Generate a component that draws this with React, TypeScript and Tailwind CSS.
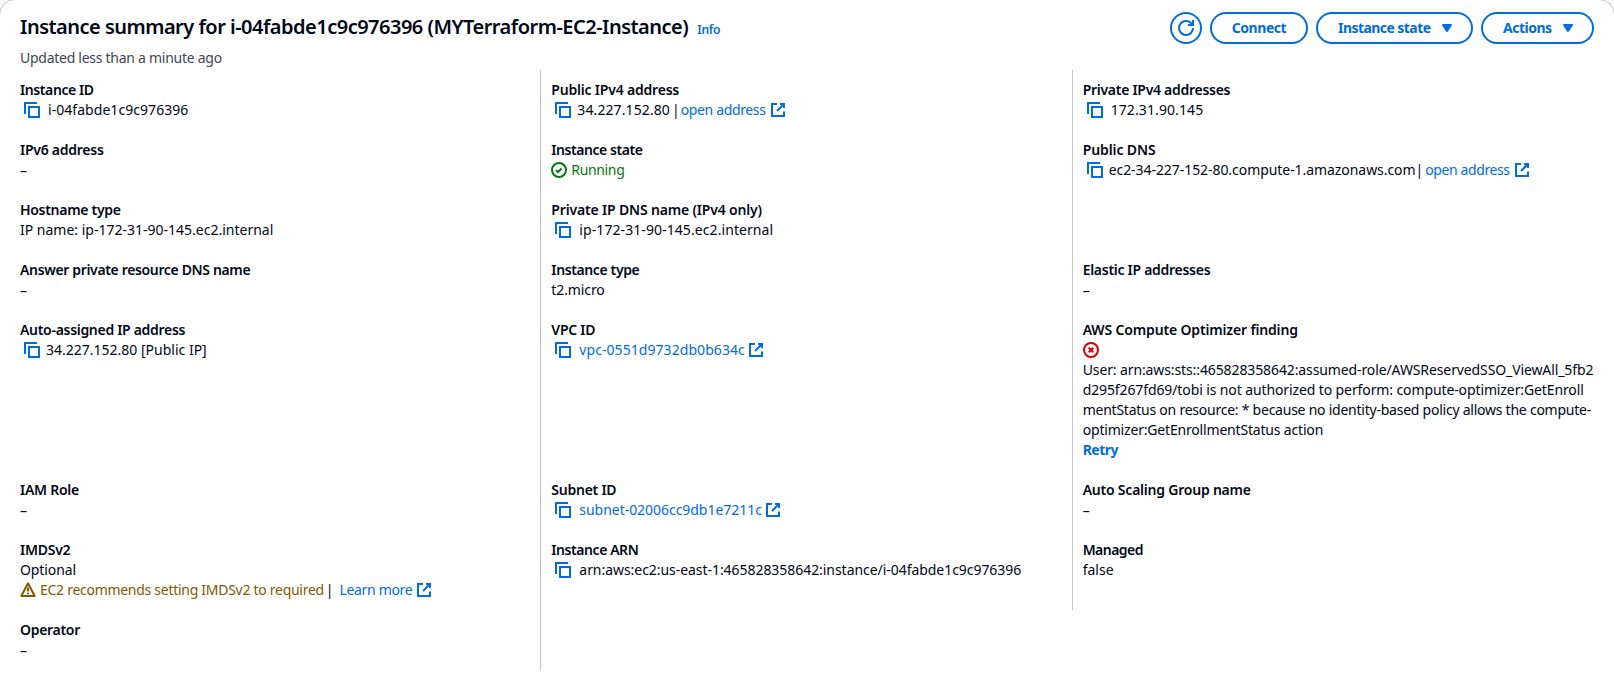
import React from "react";

function Icon({ className = "", children }: { className?: string; children: React.ReactNode }) {
  return (
    <svg viewBox="0 0 16 16" className={"h-4 w-4 shrink-0 " + className} fill="none" stroke="currentColor" strokeWidth="2">
      {children}
    </svg>
  );
}

const Copy = () => (
  <Icon className="text-[#006ce0]">
    <path d="M1 12V1h12" />
    <path d="M5 5h10v10H5z" />
  </Icon>
);

const External = () => (
  <Icon className="text-[#006ce0]">
    <path d="M10 2h4v4" />
    <path d="m7 9 7-7" />
    <path d="M14 9.5V14H2V2h5" />
  </Icon>
);

const Refresh = () => (
  <Icon>
    <path d="M10 5h5V0" />
    <path d="M15 8a6.957 6.957 0 0 1-7 7 6.957 6.957 0 0 1-7-7 6.957 6.957 0 0 1 7-7 6.87 6.87 0 0 1 6.3 4" />
  </Icon>
);

const Success = () => (
  <Icon>
    <circle cx="8" cy="8" r="7" />
    <path d="m5 8 2 2 3.521-3.521" />
  </Icon>
);

const Failure = () => (
  <Icon className="text-[#db0000]">
    <circle cx="8" cy="8" r="7" />
    <path d="m10.3 5.7-4.6 4.6M10.3 10.3 5.7 5.7" />
  </Icon>
);

const Warning = () => (
  <Icon>
    <path d="m8 1.3 6.7 12.7H1.3L8 1.3z" strokeLinejoin="round" />
    <path d="M8 5.5v4M8 10.7v1.6" />
  </Icon>
);

const Caret = () => (
  <Icon className="ml-2">
    <path d="M4 5h8l-4 6-4-6z" fill="currentColor" strokeLinejoin="round" />
  </Icon>
);

type CellProps = { label: string; track: string; border?: boolean; children?: React.ReactNode };

function Cell({ label, track, border = true, children }: CellProps) {
  return (
    <div className={"min-w-0 border-r p-[10px] " + (border ? "border-[#c6c6cd]" : "border-transparent")}>
      <div className="flex">
        <span className={"whitespace-nowrap font-semibold " + track}>{label}</span>
      </div>
      {children}
    </div>
  );
}

function Row({ className = "", children }: { className?: string; children: React.ReactNode }) {
  return <div className={"flex h-5 items-center whitespace-nowrap " + className}>{children}</div>;
}

const Empty = () => <Row className="pt-0.5">–</Row>;

const BUTTON = "flex h-8 items-center rounded-full border-2 border-[#006ce0] font-bold text-[#006ce0]";
const LINK = "text-[#006ce0]";

export default function App() {
  return (
    <div className="h-[680px] w-[1614px] overflow-hidden bg-[#f9f9fa] font-['Noto_Sans',sans-serif] text-[14px] leading-5 text-[#000716]">
      <div className="-mx-px -mt-px h-[700px] rounded-t-[16px] border border-[#c6c6cd] bg-white">
        <header className="flex h-[70px] items-start justify-between px-5 pt-3">
          <div>
            <div className="flex h-8 items-baseline whitespace-nowrap leading-[30px]">
              <h1 className="text-[20px] font-semibold tracking-[-0.51px]">
                Instance summary for i-04fabde1c9c976396 (MYTerraform-EC2-Instance)
              </h1>
              <a className="ml-[9px] text-[12px] font-semibold tracking-[-0.3px] text-[#006ce0]">Info</a>
            </div>
            <p className="mt-1 tracking-[-0.27px] text-[#424650]">Updated less than a minute ago</p>
          </div>
          <div className="flex gap-2">
            <button aria-label="Refresh" className={BUTTON + " w-8 justify-center"}>
              <Refresh />
            </button>
            <button className={BUTTON + " w-[98px] justify-center"}>
              <span className="tracking-[-0.45px]">Connect</span>
            </button>
            <button className={BUTTON + " w-[157px] justify-between pr-4 pl-5"}>
              <span className="tracking-[-0.56px]">Instance state</span>
              <Caret />
            </button>
            <button className={BUTTON + " w-[113px] justify-between pr-4 pl-5"}>
              <span className="tracking-[-0.5px]">Actions</span>
              <Caret />
            </button>
          </div>
        </header>
        <main className="mx-[10px] grid grid-cols-3">
          <Cell label="Instance ID" track="tracking-[-0.4px]">
            <Row className="pl-1"><Copy /><span className="ml-2 tracking-[0.05px]">i-04fabde1c9c976396</span></Row>
          </Cell>
          <Cell label="Public IPv4 address" track="tracking-[-0.2px]">
            <Row className="pl-1">
              <Copy />
              <span className="ml-1.5 tracking-[0.1px]">34.227.152.80</span>
              <span className="ml-0.5">|</span>
              <a className={LINK + " mr-1 ml-px tracking-[-0.36px]"}>open address</a>
              <External />
            </Row>
          </Cell>
          <Cell label="Private IPv4 addresses" track="tracking-[-0.28px]" border={false}>
            <Row className="pl-1"><Copy /><span className="ml-2 tracking-[0.1px]">172.31.90.145</span></Row>
          </Cell>

          <Cell label="IPv6 address" track="tracking-[-0.25px]"><Empty /></Cell>
          <Cell label="Instance state" track="tracking-[-0.44px]">
            <Row className="text-[#00790f]"><Success /><span className="ml-1 tracking-[-0.35px]">Running</span></Row>
          </Cell>
          <Cell label="Public DNS" track="tracking-[-0.1px]" border={false}>
            <Row className="pl-1">
              <Copy />
              <span className="ml-1.5 tracking-[-0.06px]">ec2-34-227-152-80.compute-1.amazonaws.com</span>
              <span>|</span>
              <a className={LINK + " mr-1 ml-0.5 tracking-[-0.4px]"}>open address</a>
              <External />
            </Row>
          </Cell>

          <Cell label="Hostname type" track="tracking-[-0.3px]"><Row>IP name: ip-172-31-90-145.ec2.internal</Row></Cell>
          <Cell label="Private IP DNS name (IPv4 only)" track="tracking-[-0.17px]">
            <Row className="pl-1"><Copy /><span className="ml-2 tracking-[0.08px]">ip-172-31-90-145.ec2.internal</span></Row>
          </Cell>
          <div />

          <Cell label="Answer private resource DNS name" track="tracking-[-0.35px]"><Empty /></Cell>
          <Cell label="Instance type" track="tracking-[-0.38px]"><Row className="tracking-[-0.1px]">t2.micro</Row></Cell>
          <Cell label="Elastic IP addresses" track="tracking-[-0.28px]" border={false}><Empty /></Cell>

          <Cell label="Auto-assigned IP address" track="tracking-[-0.3px]">
            <Row className="pl-1"><Copy /><span className="ml-1.5">34.227.152.80 [Public IP]</span></Row>
          </Cell>
          <Cell label="VPC ID" track="tracking-[-0.25px]">
            <Row className="pl-1">
              <Copy />
              <a className={LINK + " mr-[3px] ml-2 tracking-[0.06px]"}>vpc-0551d9732db0b634c</a>
              <External />
            </Row>
          </Cell>
          <Cell label="AWS Compute Optimizer finding" track="tracking-[-0.16px]" border={false}>
            <Row><Failure /></Row>
            <Row className="tracking-[-0.11px]">User: arn:aws:sts::465828358642:assumed-role/AWSReservedSSO_ViewAll_5fb2</Row>
            <Row className="tracking-[-0.11px]">d295f267fd69/tobi is not authorized to perform: compute-optimizer:GetEnroll</Row>
            <Row className="tracking-[-0.24px]">mentStatus on resource: * because no identity-based policy allows the compute-</Row>
            <Row className="tracking-[-0.18px]">optimizer:GetEnrollmentStatus action</Row>
            <Row className="font-bold tracking-[-0.5px] text-[#006ce0]">Retry</Row>
          </Cell>

          <Cell label="IAM Role" track="tracking-[-0.25px]"><Empty /></Cell>
          <Cell label="Subnet ID" track="tracking-[-0.25px]">
            <Row className="pl-1">
              <Copy />
              <a className={LINK + " mr-[3px] ml-2 tracking-[-0.04px]"}>subnet-02006cc9db1e7211c</a>
              <External />
            </Row>
          </Cell>
          <Cell label="Auto Scaling Group name" track="tracking-[-0.22px]" border={false}><Empty /></Cell>

          <Cell label="IMDSv2" track="tracking-[-0.25px]">
            <Row className="tracking-[-0.1px]">Optional</Row>
            <Row>
              <span className="flex items-center text-[#855900]">
                <Warning />
                <span className="ml-1 tracking-[-0.28px]">EC2 recommends setting IMDSv2 to required</span>
              </span>
              <span className="mr-1.5 ml-0.5">|</span>
              <a className={LINK + " mr-1 tracking-[-0.35px]"}>Learn more</a>
              <External />
            </Row>
          </Cell>
          <Cell label="Instance ARN" track="tracking-[-0.43px]">
            <Row className="pl-1">
              <Copy />
              <span className="ml-2 tracking-[-0.05px]">arn:aws:ec2:us-east-1:465828358642:instance/i-04fabde1c9c976396</span>
            </Row>
          </Cell>
          <Cell label="Managed" track="tracking-[-0.55px]" border={false}><Row>false</Row></Cell>

          <Cell label="Operator" track="tracking-[-0.3px]"><Empty /></Cell>
        </main>
      </div>
    </div>
  );
}
